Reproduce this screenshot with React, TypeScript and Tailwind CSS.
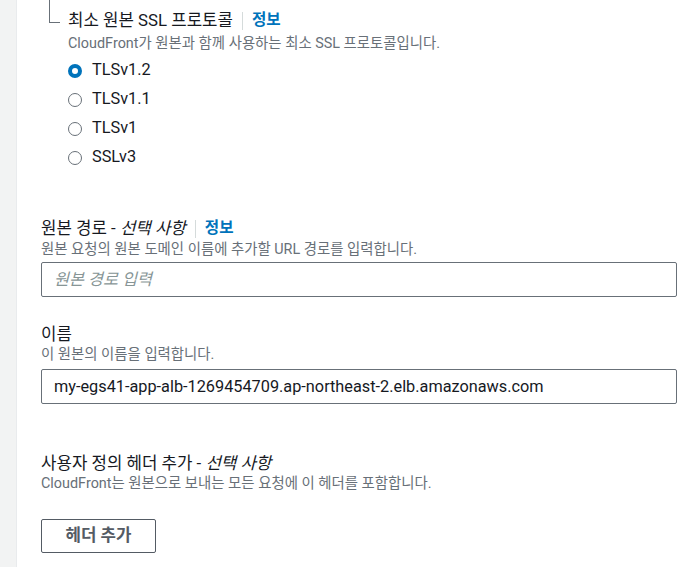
const font = {
  fontFamily: 'Roboto, "Noto Sans CJK KR", sans-serif',
};

function Info() {
  return (
    <>
      <span className="mx-[9px] inline-block h-[18px] w-px bg-[#d5dbdb]" />
      <span className="text-[15.6px] font-bold text-[#0073bb]">정보</span>
    </>
  );
}

function Radio({ label, checked }: { label: string; checked?: boolean }) {
  return (
    <div className="flex h-[29px] items-center">
      <span
        className={
          checked
            ? "box-border h-[14px] w-[14px] rounded-full border-[4px] border-[#0073bb] bg-white"
            : "box-border h-[14px] w-[14px] rounded-full border border-[#687078] bg-white"
        }
      />
      <span className="ml-[10px] text-[16.3px] text-[#16191f]">{label}</span>
    </div>
  );
}

export default function App() {
  return (
    <div className="flex h-[567px] w-[695px] overflow-hidden bg-white" style={font}>
      <div className="w-[17px] shrink-0 border-r border-[#e9ebed] bg-[#f2f3f3]" />
      <div className="flex-1 pl-6 pr-[18px]">
        {/* nested SSL protocol */}
        <div className="flex">
          <div className="ml-[8px] h-[23px] w-[11px] shrink-0 border-b border-l border-[#687078]" />
          <div className="ml-[8px] pt-[9px]">
            <div className="flex h-[24px] items-center text-[16.8px] text-[#16191f]">
              최소 원본 SSL 프로토콜
              <Info />
            </div>
            <div className="text-[14.4px] leading-[22px] text-[#687078]">
              CloudFront가 원본과 함께 사용하는 최소 SSL 프로토콜입니다.
            </div>
            <div className="mt-[1px]">
              <Radio label="TLSv1.2" checked />
              <Radio label="TLSv1.1" />
              <Radio label="TLSv1" />
              <Radio label="SSLv3" />
            </div>
          </div>
        </div>

        {/* origin path */}
        <div className="mt-[45px]">
          <div className="flex h-[24px] items-center text-[16.8px] text-[#16191f]">
            원본 경로 -&nbsp;<i>선택 사항</i>
            <Info />
          </div>
          <div className="h-[18px] text-[14.4px] leading-[18px] text-[#687078]">
            원본 요청의 원본 도메인 이름에 추가할 URL 경로를 입력합니다.
          </div>
          <input
            className="mt-[3px] box-border block h-[35px] w-full rounded-[2px] border border-[#687078] px-[12px] text-[16.3px] text-[#16191f] outline-none placeholder:italic placeholder:text-[#879596]"
            placeholder="원본 경로 입력"
          />
        </div>

        {/* name */}
        <div className="mt-[25px]">
          <div className="h-[24px] text-[16.8px] leading-[24px] text-[#16191f]">이름</div>
          <div className="h-[18px] text-[14.4px] leading-[18px] text-[#687078]">
            이 원본의 이름을 입력합니다.
          </div>
          <input
            className="mt-[5px] box-border block h-[35px] w-full rounded-[2px] border border-[#687078] px-[12px] text-[16.3px] text-[#16191f] outline-none"
            defaultValue="my-egs41-app-alb-1269454709.ap-northeast-2.elb.amazonaws.com"
          />
        </div>

        {/* custom headers */}
        <div className="mt-[47px]">
          <div className="h-[24px] text-[16.8px] leading-[24px] text-[#16191f]">
            사용자 정의 헤더 추가 - <i>선택 사항</i>
          </div>
          <div className="h-[18px] text-[14.4px] leading-[18px] text-[#687078]">
            CloudFront는 원본으로 보내는 모든 요청에 이 헤더를 포함합니다.
          </div>
          <button className="mt-[26px] box-border block h-[34px] w-[115px] rounded-[2px] border border-[#545b64] bg-white text-[16.8px] font-bold text-[#545b64]">
            헤더 추가
          </button>
        </div>
      </div>
    </div>
  );
}
